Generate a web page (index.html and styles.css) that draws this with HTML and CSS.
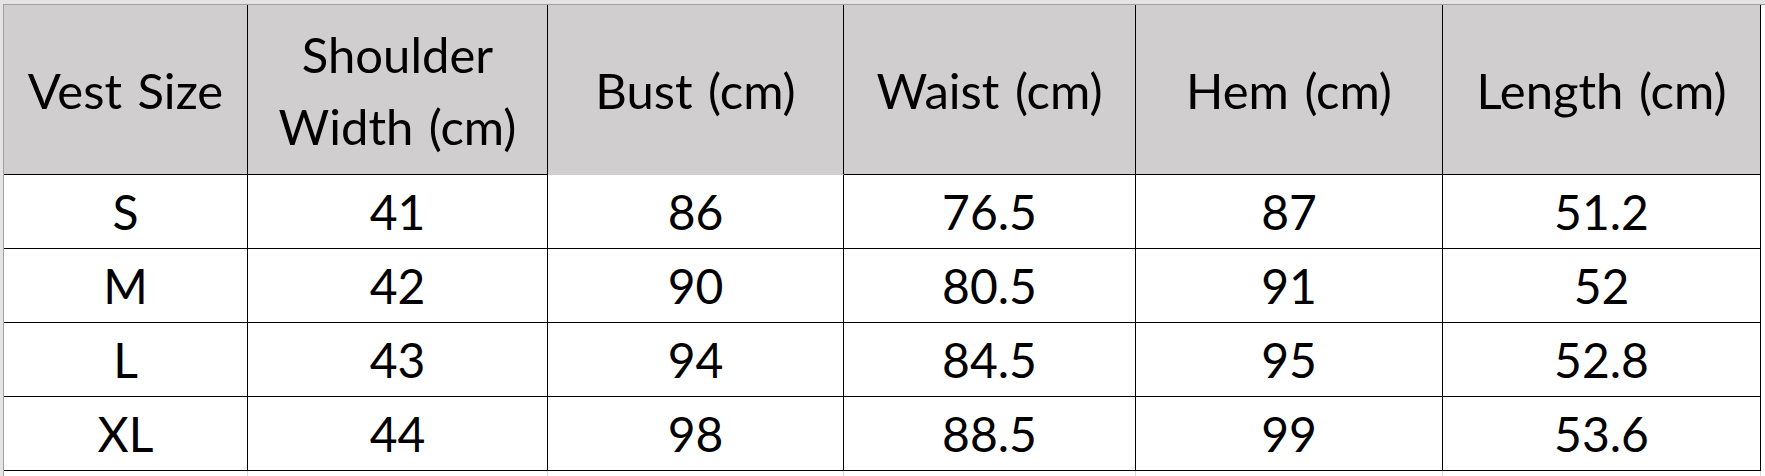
FILE: index.html
```html
<!DOCTYPE html>
<html lang="en">
<head>
<meta charset="utf-8">
<title>Vest Size Chart</title>
<link rel="stylesheet" href="styles.css">
</head>
<body>
<div class="sheet">
  <div class="grid">
    <div class="cell hd">Vest Size</div>
    <div class="cell hd">Shoulder<br>Width (cm)</div>
    <div class="cell hd bust">Bust (cm)</div>
    <div class="cell hd">Waist (cm)</div>
    <div class="cell hd">Hem (cm)</div>
    <div class="cell hd">Length (cm)</div>

    <div class="cell">S</div><div class="cell">41</div><div class="cell">86</div><div class="cell">76.5</div><div class="cell">87</div><div class="cell">51.2</div>
    <div class="cell">M</div><div class="cell">42</div><div class="cell">90</div><div class="cell">80.5</div><div class="cell">91</div><div class="cell">52</div>
    <div class="cell">L</div><div class="cell">43</div><div class="cell">94</div><div class="cell">84.5</div><div class="cell">95</div><div class="cell">52.8</div>
    <div class="cell">XL</div><div class="cell">44</div><div class="cell">98</div><div class="cell">88.5</div><div class="cell">99</div><div class="cell">53.6</div>

    <div class="gap"></div><div class="gap"></div><div class="gap"></div><div class="gap"></div><div class="gap"></div><div class="gap"></div>
  </div>
</div>
</body>
</html>
```
FILE: styles.css
```css
html, body {
  margin: 0;
  padding: 0;
  background: #ffffff;
}

.sheet {
  width: 1765px;
  height: 476px;
  box-sizing: border-box;
  padding: 4px 0 0 3px;
  background: #e4e4e4;
  overflow: hidden;
}

.grid {
  display: grid;
  grid-template-columns: 244px 300px 296px 292px 307px 318px;
  grid-template-rows: 170px 74px 74px 74px 74px 20px;
  width: 1762px;
  border-top: 1px solid #a0a0a0;
  border-left: 1px solid #a0a0a0;
  background: #ffffff;
  font-family: "Lato", "Liberation Sans", sans-serif;
  font-size: 48px;
  color: #000000;
}

.cell {
  box-sizing: border-box;
  display: flex;
  align-items: center;
  justify-content: center;
  text-align: center;
  border-right: 1px solid #000000;
  border-bottom: 1px solid #000000;
}

.hd {
  background: #d0cece;
  font-size: 49px;
  line-height: 72px;
  word-spacing: 3px;
}

.hd.bust {
  border-bottom-color: #d0cece;
}

.gap {
  box-sizing: border-box;
  border-right: 1px solid #dadada;
}
```
